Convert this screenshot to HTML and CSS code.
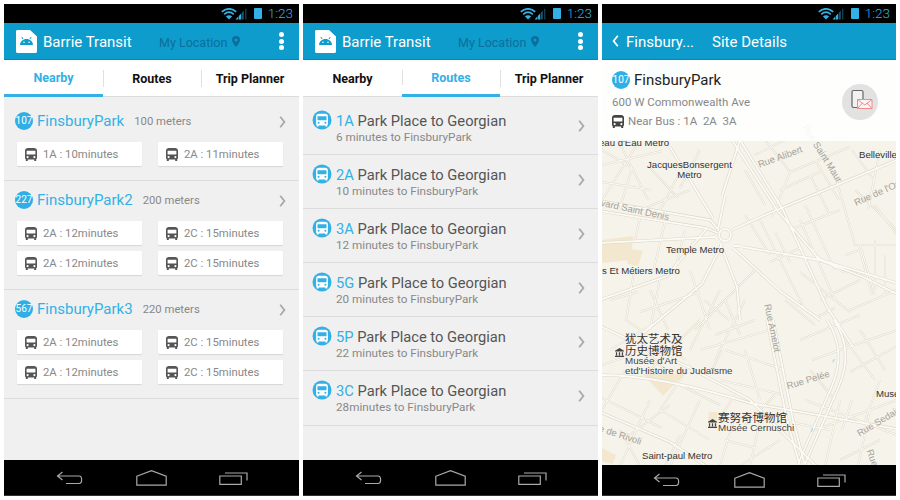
FILE: index.html
```html
<!DOCTYPE html>
<html lang="en">
<head>
<meta charset="utf-8">
<title>Barrie Transit</title>
<link rel="stylesheet" href="styles.css">
</head>
<body>
<svg class="defs" width="0" height="0" aria-hidden="true">
  <symbol id="bus" viewBox="0 0 12 13">
    <path fill="currentColor" fill-rule="evenodd" d="M3 0h6c1.700 0 3 1 3 2.500V10c0 .6-.3 1-.8 1.200V13H9.200v-1.500H2.800V13H.8v-1.800C.3 11 0 10.600 0 10V2.500C0 1 1.300 0 3 0zM1.600 2.800v3.600h8.800V2.800zM2.600 8a1.100 1.100 0 1 0 0 2.200 1.100 1.100 0 0 0 0-2.200zm6.800 0a1.100 1.100 0 1 0 0 2.200 1.100 1.100 0 0 0 0-2.200z"/>
  </symbol>
  <symbol id="busdisc" viewBox="0 0 20 20">
    <circle cx="10" cy="10" r="9.500" fill="#33b1e6"/>
    <path fill="#fff" fill-rule="evenodd" d="M7 3.800h6c1.800 0 2.900.9 2.900 2.400v8c0 .5-.2.800-.6 1v1.300h-1.900v-1H6.600v1H4.700V15.200c-.4-.2-.6-.5-.6-1v-8c0-1.500 1.100-2.400 2.900-2.400zM5.500 6.300v4h9v-4zM6.600 11.700a1 1 0 1 0 0 2 1 1 0 0 0 0-2zm6.800 0a1 1 0 1 0 0 2 1 1 0 0 0 0-2z"/>
  </symbol>
  <symbol id="status" viewBox="0 0 26 12">
    <g fill="none" stroke="#33b1e6" stroke-width="1.700">
      <path d="M.8 3.800C5-.2 11-.2 15.200 3.800M3.200 6.300c2.900-2.500 6.700-2.500 9.600 0"/>
    </g>
    <path fill="#33b1e6" d="M4.800 8.300c2-1.500 4.400-1.500 6.400 0L8 11.600z"/>
    <path fill="#33b1e6" d="M14.500 11.500l3-3.200v3.200zM18 11.500V7.800l2.200-2.400v6.100z"/>
    <path fill="#17576f" d="M20.800 11.500V4.800L22.800 2.600v8.900zM24.300 11.500V.8h1v10.700z"/>
  </symbol>
  <symbol id="chev" viewBox="0 0 7 12">
    <path fill="none" stroke="#a8a8a8" stroke-width="1.800" d="M1.200.8 5.400 6 1.200 11.200"/>
  </symbol>
  <symbol id="back" viewBox="0 0 28 14">
    <path fill="none" stroke="#a9a9a9" stroke-width="1.200" d="M6.500 1 1.500 5 6.500 9M1.500 5H23c3.500 0 3.500 7.500 0 7.500H10"/>
  </symbol>
  <symbol id="home" viewBox="0 0 31 16">
    <path fill="none" stroke="#a9a9a9" stroke-width="1.200" d="M.8 6.200 15.500.7l14.700 5.500v9H.8z"/>
  </symbol>
  <symbol id="recent" viewBox="0 0 29 14">
    <path fill="none" stroke="#a9a9a9" stroke-width="1.200" d="M.8 5h21.500v8.300H.8zM6 2h22v7.500"/>
  </symbol>
  <symbol id="appbarlogo" viewBox="0 0 21 23">
    <path fill="#fff" d="M1.500 0H14l7 6.500V21.500c0 .8-.7 1.500-1.500 1.500h-18C.7 23 0 22.300 0 21.500V1.500C0 .7.700 0 1.500 0z"/>
    <path fill="#0e9ccd" d="M4 15c.2-3.600 3-6 6.500-6s6.300 2.400 6.500 6z"/>
    <path stroke="#0e9ccd" d="M7 9L5.800 7M14 9l1.200-2"/>
    <circle cx="8" cy="12.200" r=".8" fill="#fff"/><circle cx="13" cy="12.200" r=".8" fill="#fff"/>
  </symbol>
  <g id="majors">
    <path d="M600 201l110 19 8 9M600 211l106 17 12 5M600 243l115-6"/>
    <path d="M732 230l40-18 125-52M743 247l77 13 77 23M734 246l6 0"/>
    <path d="M732 140l45 70 43 50 43 17 34 17M740 140l43 70 44 97 26 40"/>
    <path d="M670 147l43 71M725 196l-7 33M722 196l18-56"/>
    <path d="M707 228l-40 48-67 24M722 244l-20 40-60 50"/>
    <path d="M733 248l47 43 40 29M720 243l17 44 3 33"/>
    <path d="M767 320l20 100 13 46M773 320l20 100 12 46"/>
    <path d="M827 320q20 30 5 66l-34 78M834 320q20 30 5 66l-34 78"/>
    <path d="M600 375q60 0 150 28l147 26M600 412l70 30 36 24M600 326l90 42 60 32 66 66"/>
    <circle cx="725" cy="235" r="6"/>
  </g>
  <g id="minors">
    <path d="M640 140l-38 60M618 140l30 60M602 165l60-14M680 172l-25 48M690 190l-50 20M602 182l50 8M765 140l25 32 -18 45M790 172l60-25M815 160l24 40M835 175l20 70 42 0M790 230l50-20M855 190l42 40M760 220l45 90M800 220l35 80M820 300l40-20M860 245l15 50M875 240l0 50M800 272l50 40M850 310l47-20M815 255l30 18"/>
    <path d="M634 272l-8 48 60 40M660 278l-10 52M690 270l20 60M640 312l60-20M610 350l50-30M700 320l-50 50M720 290l-30 60M745 300l-30 60M755 270l-60 60M770 330l-70 20M800 340l60-25M812 360l85-30M850 372l47-26M845 340l30 40M805 400l92 35M815 430l82-30M840 400l-15 66M870 410l-12 56M725 350l60 20M720 380l60 14M700 400l-30 66M735 415l-15 51M762 412l-12 54M650 400l-30 66M602 398l60 30M625 370l-23 40M660 410l50 30M630 435l40-30M690 365l-30 45M780 420l50 10M745 350l15 50M712 370l10-20"/>
    <path d="M602 100l70-20 60 40M690 60l-30 80M730 60l40 80M800 60l-40 80M860 70l-60 70M897 100l-60 40M620 60l-18 50"/>
    <path d="M602 150l30 18 -12 40M650 168l28 30M700 150l-20 38M755 155l30-15M780 190l40-18M745 215l25 40M765 205l-20-35M805 205l30 65M830 215l-20-40M852 150l22 30M880 150l-12 60M875 205l22 30M845 255l15-5 12 45M885 255l0 40M790 262l-15-30M770 262l30-14M640 218l-5 22M665 222l-12 50M685 230l-10 40M610 300l28-8M650 290l18 40M704 300l25 20M725 300l15 35M755 320l-40 15M785 300l30 25M815 318l20-10M860 330l25 40M640 345l25 25M602 365l30-10M680 385l40 20M735 395l-20 30M775 395l-30 30M810 370l25 30M852 400l-10 30M880 380l-15 40M620 430l20 36M680 435l-15 31M780 440l-40 26M880 440l-40 20M725 440l30 8"/>
  </g>
</svg>

<section class="screen">
  <div class="statusbar"><svg class="status-ic"><use href="#status"/></svg><span class="batt"></span><span class="clock">1:23</span></div>
  <header class="appbar">
    <svg class="logo"><use href="#appbarlogo"/></svg>
    <span class="title">Barrie Transit</span>
    <span class="loc">My Location</span>
    <svg class="pin" viewBox="0 0 8 11"><path fill="#0b6e9b" fill-rule="evenodd" d="M4 0a4 4 0 0 1 4 4c0 2.500-4 7-4 7S0 6.500 0 4a4 4 0 0 1 4-4zm0 2.500a1.500 1.500 0 1 0 0 3 1.500 1.500 0 0 0 0-3z"/></svg>
    <span class="dots"><i></i><i></i><i></i></span>
  </header>
  <nav class="tabs">
    <span class="tab active">Nearby</span>
    <span class="tab sep">Routes</span>
    <span class="tab sep">Trip Planner</span>
  </nav>
  <main class="content list-nearby">
    <article class="group">
      <div class="ghead"><span class="badge">107</span><span class="gname">FinsburyPark</span><span class="dist">100 meters</span><svg class="chev"><use href="#chev"/></svg></div>
      <div class="cards">
        <div class="card"><svg class="busic"><use href="#bus"/></svg>1A : 10minutes</div>
        <div class="card"><svg class="busic"><use href="#bus"/></svg>2A : 11minutes</div>
      </div>
    </article>
    <article class="group">
      <div class="ghead"><span class="badge">227</span><span class="gname">FinsburyPark2</span><span class="dist">200 meters</span><svg class="chev"><use href="#chev"/></svg></div>
      <div class="cards">
        <div class="card"><svg class="busic"><use href="#bus"/></svg>2A : 12minutes</div>
        <div class="card"><svg class="busic"><use href="#bus"/></svg>2C : 15minutes</div>
        <div class="card"><svg class="busic"><use href="#bus"/></svg>2A : 12minutes</div>
        <div class="card"><svg class="busic"><use href="#bus"/></svg>2C : 15minutes</div>
      </div>
    </article>
    <article class="group">
      <div class="ghead"><span class="badge">567</span><span class="gname">FinsburyPark3</span><span class="dist">220 meters</span><svg class="chev"><use href="#chev"/></svg></div>
      <div class="cards">
        <div class="card"><svg class="busic"><use href="#bus"/></svg>2A : 12minutes</div>
        <div class="card"><svg class="busic"><use href="#bus"/></svg>2C : 15minutes</div>
        <div class="card"><svg class="busic"><use href="#bus"/></svg>2A : 12minutes</div>
        <div class="card"><svg class="busic"><use href="#bus"/></svg>2C : 15minutes</div>
      </div>
    </article>
  </main>
  <footer class="navbar"><svg class="nav-back"><use href="#back"/></svg><svg class="nav-home"><use href="#home"/></svg><svg class="nav-recent"><use href="#recent"/></svg></footer>
</section>

<section class="screen">
  <div class="statusbar"><svg class="status-ic"><use href="#status"/></svg><span class="batt"></span><span class="clock">1:23</span></div>
  <header class="appbar">
    <svg class="logo"><use href="#appbarlogo"/></svg>
    <span class="title">Barrie Transit</span>
    <span class="loc">My Location</span>
    <svg class="pin" viewBox="0 0 8 11"><path fill="#0b6e9b" fill-rule="evenodd" d="M4 0a4 4 0 0 1 4 4c0 2.500-4 7-4 7S0 6.500 0 4a4 4 0 0 1 4-4zm0 2.500a1.500 1.500 0 1 0 0 3 1.500 1.500 0 0 0 0-3z"/></svg>
    <span class="dots"><i></i><i></i><i></i></span>
  </header>
  <nav class="tabs">
    <span class="tab">Nearby</span>
    <span class="tab sep active">Routes</span>
    <span class="tab sep">Trip Planner</span>
  </nav>
  <main class="content list-routes">
    <article class="route"><svg class="busdisc"><use href="#busdisc"/></svg><div class="rtext"><p class="rline"><b>1A</b> Park Place to Georgian</p><p class="rsub">6 minutes to FinsburyPark</p></div><svg class="chev"><use href="#chev"/></svg></article>
    <article class="route"><svg class="busdisc"><use href="#busdisc"/></svg><div class="rtext"><p class="rline"><b>2A</b> Park Place to Georgian</p><p class="rsub">10 minutes to FinsburyPark</p></div><svg class="chev"><use href="#chev"/></svg></article>
    <article class="route"><svg class="busdisc"><use href="#busdisc"/></svg><div class="rtext"><p class="rline"><b>3A</b> Park Place to Georgian</p><p class="rsub">12 minutes to FinsburyPark</p></div><svg class="chev"><use href="#chev"/></svg></article>
    <article class="route"><svg class="busdisc"><use href="#busdisc"/></svg><div class="rtext"><p class="rline"><b>5G</b> Park Place to Georgian</p><p class="rsub">20 minutes to FinsburyPark</p></div><svg class="chev"><use href="#chev"/></svg></article>
    <article class="route"><svg class="busdisc"><use href="#busdisc"/></svg><div class="rtext"><p class="rline"><b>5P</b> Park Place to Georgian</p><p class="rsub">22 minutes to FinsburyPark</p></div><svg class="chev"><use href="#chev"/></svg></article>
    <article class="route"><svg class="busdisc"><use href="#busdisc"/></svg><div class="rtext"><p class="rline"><b>3C</b> Park Place to Georgian</p><p class="rsub">28minutes to FinsburyPark</p></div><svg class="chev"><use href="#chev"/></svg></article>
  </main>
  <footer class="navbar"><svg class="nav-back"><use href="#back"/></svg><svg class="nav-home"><use href="#home"/></svg><svg class="nav-recent"><use href="#recent"/></svg></footer>
</section>

<section class="screen third">
  <div class="statusbar"><svg class="status-ic"><use href="#status"/></svg><span class="batt"></span><span class="clock">1:23</span></div>
  <header class="appbar detailbar">
    <svg class="backchev" viewBox="0 0 7 12"><path fill="none" stroke="#fff" stroke-width="1.800" d="M5.800.8 1.600 6l4.200 5.200"/></svg>
    <span class="crumb">Finsbury...</span>
    <span class="crumb-title">Site Details</span>
  </header>
  <main class="map">
    <svg class="roads" viewBox="602 60 294 406" preserveAspectRatio="none">
      <path fill="#bfe3f1" d="M650 60h38l-10 16-12 6-12 1-8-8z"/>
      <g fill="#f3e8cf">
        <path d="M602 240l31-4-2 24-29 3zM630 249l13 2-5 15-11-2zM643 374h41l-21 22zM709 412h9l-2 11h-8zM602 448l14 7-3 9-11-3z"/>
      </g>
      <use href="#minors" fill="none" stroke="#e2dccb" stroke-width="2"/>
      <use href="#majors" fill="none" stroke="#ded8c7" stroke-width="3"/>
      <use href="#minors" fill="none" stroke="#fbfaf6" stroke-width="1"/>
      <use href="#majors" fill="none" stroke="#fcfbf8" stroke-width="1.800"/>
      <path fill="#a5d6ec" d="M832 362l2-3 1 .5-2 3zM811 432l1-4 1 .3-1 4z"/>
    </svg>
    <span class="lbl" id="l-eau">eau d'Eau Metro</span>
    <span class="lbl center" id="l-jac">JacquesBonsergent<br>Metro</span>
    <span class="lbl" id="l-bel">Belleville</span>
    <span class="lbl" id="l-tem">Temple Metro</span>
    <span class="lbl" id="l-met">s Et Métiers Metro</span>
    <span class="lbl" id="l-sp">Saint-paul Metro</span>
    <span class="lbl" id="l-mus">Musée</span>
    <span class="lbl street" id="s-ali">Rue Alibert</span>
    <span class="lbl street" id="s-mau">Rue Saint Maur</span>
    <span class="lbl street" id="s-ori">Rue de l'Orillon</span>
    <span class="lbl street" id="s-den">vard Saint Denis</span>
    <span class="lbl street" id="s-ame">Rue Amelot</span>
    <span class="lbl street" id="s-pel">Rue Pelée</span>
    <span class="lbl street" id="s-sed">Rue Sedaine</span>
    <span class="lbl street" id="s-riv">e de Rivoli</span>
    <span class="lbl street" id="s-rue">Rue</span>
    <div class="poi" id="p-jud">
      <svg class="museum" viewBox="0 0 10 10"><path fill="#444" d="M5 0l5 3v1H0V3zM1 4.800h1.400v3.400H1zM4.300 4.800h1.400v3.400H4.300zM7.600 4.800H9v3.400H7.600zM0 8.700h10V10H0z"/></svg>
      <div class="poitext"><span class="cjk">犹太艺术及<br>历史博物馆</span><span class="sub">Musée d'Art<br>etd'Histoire du Judaïsme</span></div>
    </div>
    <div class="poi" id="p-cer">
      <svg class="museum" viewBox="0 0 10 10"><path fill="#444" d="M5 0l5 3v1H0V3zM1 4.800h1.400v3.400H1zM4.300 4.800h1.400v3.400H4.300zM7.600 4.800H9v3.400H7.600zM0 8.700h10V10H0z"/></svg>
      <div class="poitext"><span class="cjk">赛努奇博物馆</span><span class="sub">Musée Cernuschi</span></div>
    </div>
    <aside class="detail">
      <div class="dname"><span class="badge">107</span><span class="dtitle">FinsburyPark</span></div>
      <p class="addr">600 W Commonwealth Ave</p>
      <p class="near"><svg class="busic dark"><use href="#bus"/></svg>Near Bus : 1A&nbsp; 2A&nbsp; 3A</p>
      <span class="msg">
        <svg viewBox="0 0 36 36" class="msgic">
          <rect x="10" y="6.500" width="11" height="17" rx="1.500" fill="#f1f1f1" stroke="#666" stroke-width="1.200"/>
          <path fill="#fdf3f3" stroke="#ec8c8c" d="M15.500 15.500h14.500v9H15.500z"/>
          <path fill="none" stroke="#ec8c8c" d="M15.500 15.500l7.300 5.500 7.200-5.500M15.500 24.500l5-5.500M30 24.500l-5-5.500"/>
        </svg>
      </span>
    </aside>
  </main>
  <footer class="navbar"><svg class="nav-back"><use href="#back"/></svg><svg class="nav-home"><use href="#home"/></svg><svg class="nav-recent"><use href="#recent"/></svg></footer>
</section>
</body>
</html>
```

FILE: styles.css
```css
* { box-sizing: border-box; }
html, body { margin: 0; padding: 0; }
body {
  width: 900px;
  height: 500px;
  background: #fff;
  display: flex;
  gap: 4px;
  padding: 4px 0 4px 4px;
  font-family: Roboto, "Noto Sans", sans-serif;
  overflow: hidden;
}
.defs { position: absolute; }
p { margin: 0; }

.screen {
  width: 295px;
  height: 492px;
  display: flex;
  flex-direction: column;
  background: #f0f0f0;
  overflow: hidden;
}
.third { width: 294px; }

.statusbar {
  height: 19px;
  flex: none;
  background: #000;
  display: flex;
  align-items: center;
  justify-content: flex-end;
  padding-right: 6px;
}
.status-ic { width: 26px; height: 12px; margin-right: 7px; }
.batt {
  width: 8px;
  height: 11px;
  background: #33b1e6;
  border-radius: 1px;
  margin-right: 6px;
}
.clock { color: #33b1e6; font-size: 13.500px; font-weight: 300; line-height: 19px; }

.appbar {
  height: 37px;
  flex: none;
  background: #0e9ccd;
  border-bottom: 1px solid #0c86b0;
  display: flex;
  align-items: center;
  padding-left: 12px;
}
.logo { width: 21px; height: 23px; flex: none; }
.title { color: #fff; font-size: 15px; margin-left: 6px; width: 116px; padding-top: 1px; }
.loc { color: #0b6e9b; font-size: 12.500px; white-space: nowrap; padding-top: 2px; }
.pin { width: 8px; height: 11px; margin-left: 5px; margin-top: 1px; }
.dots { margin-left: auto; margin-right: 15px; display: flex; flex-direction: column; gap: 1.500px; }
.dots i { width: 5px; height: 5px; border-radius: 50%; background: #fff; display: block; }

.detailbar { padding-left: 10px; }
.backchev { width: 7px; height: 12px; flex: none; }
.crumb { color: #fff; font-size: 15px; margin-left: 7px; width: 86px; padding-top: 1px; }
.crumb-title { color: #fff; font-size: 15px; padding-top: 1px; }

.tabs {
  height: 37px;
  flex: none;
  background: #fff;
  display: grid;
  grid-template-columns: 99px 98px 98px;
  border-bottom: 1px solid #dcdcdc;
}
.tab {
  position: relative;
  display: flex;
  align-items: center;
  justify-content: center;
  font-size: 12.500px;
  font-weight: 700;
  color: #111;
  padding-top: 2px;
  padding-bottom: 1px;
}
.tab.sep::before {
  content: "";
  position: absolute;
  left: 0;
  top: 10px;
  bottom: 9px;
  width: 1px;
  background: #e0e0e0;
}
.tab.active { color: #33b1e6; border-bottom: 3px solid #33b1e6; margin-bottom: -1px; }

.content { flex: 1; min-height: 0; }
.list-nearby { padding-top: 5px; }
.list-routes { padding-top: 4px; }

.group { padding: 9px 16px 14px 13px; border-bottom: 1px solid #dcdcdc; }
.ghead { height: 20px; display: flex; align-items: center; }
.badge {
  width: 18px;
  height: 18px;
  flex: none;
  border-radius: 50%;
  background: #2fafe6;
  color: #fff;
  font-size: 10px;
  line-height: 18px;
  text-align: center;
  margin-left: -2px;
}
.gname { color: #33b1e6; font-size: 15px; margin-left: 4px; }
.dist { color: #888; font-size: 11.300px; margin-left: 10px; }
.chev { width: 7px; height: 12px; margin-left: auto; flex: none; }
.ghead .chev { margin-right: -3px; margin-top: 2px; }

.cards {
  display: grid;
  grid-template-columns: 125px 125px;
  column-gap: 16px;
  row-gap: 6px;
  margin-top: 11px;
}
.card {
  height: 24px;
  background: #fff;
  border-radius: 1px;
  box-shadow: 0 1px 1px #d5d5d5;
  display: flex;
  align-items: center;
  padding-left: 8px;
  color: #888;
  font-size: 11.300px;
  white-space: nowrap;
}
.busic { width: 12px; height: 13px; color: #555; margin-right: 6px; flex: none; }

.route {
  height: 54.100px;
  display: flex;
  align-items: center;
  padding: 0 13px 0 9px;
  border-bottom: 1px solid #dcdcdc;
}
.busdisc { width: 20px; height: 20px; margin-top: -16px; flex: none; }
.rtext { margin-left: 4px; flex: 1; }
.rline { font-size: 14.700px; color: #555; line-height: 20px; margin-top: 0; }
.rline b { font-weight: 400; color: #33b1e6; }
.rsub { font-size: 11.700px; color: #888; line-height: 15px; margin-top: -1px; }
.route .chev { margin-left: 0; margin-top: -4px; }

.map { position: relative; flex: 1; min-height: 0; background: #f6f3ea; overflow: hidden; font-family: "Liberation Sans", Arial, sans-serif; }
.roads { position: absolute; left: 0; top: 0; width: 294px; height: 406px; }
.lbl { position: absolute; font-size: 9.600px; color: #333; white-space: nowrap; line-height: 10px; }
.center { text-align: center; }
.street { color: #a5a29a; font-size: 9.500px; }
#l-eau { left: -3px; top: 78px; }
#l-jac { left: 45px; top: 100px; }
#l-bel { left: 257px; top: 90px; }
#l-tem { left: 64px; top: 185px; }
#l-met { left: 0; top: 206px; }
#l-sp { left: 40px; top: 391px; }
#l-mus { left: 274px; top: 329px; }
#s-ali { left: 155px; top: 92px; transform: rotate(-20deg); }
#s-mau { left: 207px; top: 63px; transform: rotate(58deg); transform-origin: left top; }
#s-ori { left: 250px; top: 125px; transform: rotate(-24deg); }
#s-den { left: -2px; top: 145px; transform: rotate(12deg); }
#s-ame { left: 170px; top: 243px; transform: rotate(78deg); transform-origin: left top; }
#s-pel { left: 184px; top: 315px; transform: rotate(-17deg); }
#s-sed { left: 252px; top: 355px; transform: rotate(-31deg); }
#s-riv { left: -4px; top: 370px; transform: rotate(18deg); }
#s-rue { left: 272px; top: 388px; transform: rotate(70deg); transform-origin: left top; }

.poi { position: absolute; display: flex; align-items: flex-start; }
.museum { width: 9px; height: 9px; flex: none; margin-top: 16px; margin-right: 1px; }
.poitext { display: flex; flex-direction: column; }
.cjk { font-family: "Noto Sans CJK SC", sans-serif; font-size: 11.500px; line-height: 12px; color: #333; white-space: nowrap; }
.sub { font-size: 9.800px; line-height: 10px; color: #444; white-space: nowrap; }
#p-jud { left: 13px; top: 272px; }
#p-cer { left: 106px; top: 351px; }
#p-cer .museum { margin-top: 8px; }

.detail {
  position: absolute;
  left: 0;
  top: 0;
  width: 100%;
  height: 81px;
  padding: 11px 10px 0 10px;
  background: rgba(255, 255, 255, .9);
  font-family: Roboto, "Noto Sans", sans-serif;
}
.dname { display: flex; align-items: center; height: 18px; }
.detail .badge { margin-left: 0; }
.dtitle { font-size: 15px; color: #222; margin-left: 4px; }
.addr { font-size: 11.500px; color: #888; margin-top: 6px; line-height: 14px; }
.near { font-size: 11.500px; color: #888; margin-top: 5px; display: flex; align-items: center; line-height: 14px; }
.dark { color: #444; margin-right: 4px; }
.msg {
  position: absolute;
  left: 240px;
  top: 24px;
  width: 36px;
  height: 36px;
  border-radius: 50%;
  background: #e2e2e2;
}
.msgic { width: 36px; height: 36px; display: block; }

.navbar {
  height: 36px;
  flex: none;
  background: #000;
  display: grid;
  grid-template-columns: repeat(3, 82px);
  justify-content: center;
  justify-items: center;
  align-items: center;
  border-bottom: 1px solid #333;
}
.third .navbar { height: 31px; }
.nav-back { width: 28px; height: 14px; }
.nav-home { width: 31px; height: 16px; }
.nav-recent { width: 29px; height: 14px; }
```
